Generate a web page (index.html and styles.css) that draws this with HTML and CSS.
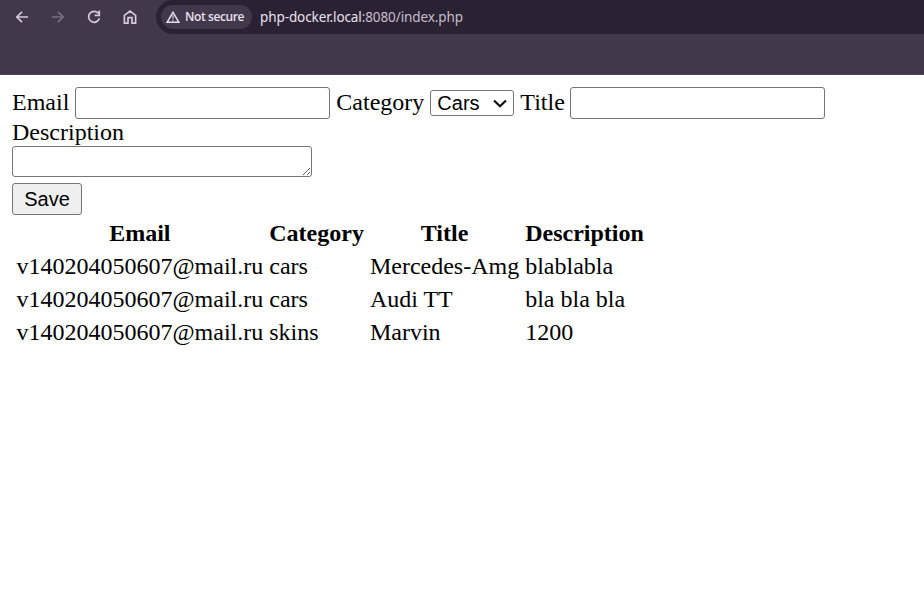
FILE: index.html
```
<!DOCTYPE html>
<html lang="en">
<head>
<meta charset="utf-8">
<title>php-docker.local</title>
<link rel="stylesheet" href="styles.css">
</head>
<body>
<header class="browser">
  <div class="toolbar">
    <nav class="nav">
      <svg class="icon" viewBox="0 0 16 16"><path d="M14 8H3M8 2.8L2.8 8L8 13.2"/></svg>
      <svg class="icon icon-off" viewBox="0 0 16 16"><path d="M2 8H13M8 2.8L13.2 8L8 13.2"/></svg>
      <svg class="icon" viewBox="0 0 16 16"><path d="M12.6 4.6A5.5 5.5 0 1 0 13.4 9.3M13.3 1.6V6.3H8.6"/></svg>
      <svg class="icon" viewBox="0 0 16 16"><path d="M2.4 14.1V6.3L8 2L13.6 6.3V14.1H10V8.6H6V14.1Z"/></svg>
    </nav>
    <div class="address">
      <div class="chip">
        <svg class="warn" viewBox="0 0 14 12"><path class="warn-edge" d="M7 1.3L12.9 11.3H1.1Z"/><path class="warn-mark" d="M7 4.2V7.8M7 8.7V10.4"/></svg>
        <span>Not secure</span>
      </div>
      <span class="url">php-docker.local<span class="path">:8080/index.php</span></span>
    </div>
  </div>
</header>
<main class="page">
  <form class="form">
    <div class="row">
      <label for="email">Email</label>
      <input id="email" class="input" type="text">
      <label for="category">Category</label>
      <div class="select-wrap">
        <select id="category" class="select"><option>Cars</option><option>Skins</option></select>
        <svg class="chevron" viewBox="0 0 14 9"><path d="M1 1.5L7 7.3L13 1.5"/></svg>
      </div>
      <label for="title">Title</label>
      <input id="title" class="input input-title" type="text">
    </div>
    <label class="desc-label" for="description">Description</label>
    <textarea id="description" class="textarea"></textarea>
    <button class="save" type="button">Save</button>
  </form>
  <table class="ads">
    <thead><tr><th>Email</th><th>Category</th><th>Title</th><th>Description</th></tr></thead>
    <tbody>
      <tr><td>v140204050607@mail.ru</td><td>cars</td><td>Mercedes-Amg</td><td>blablabla</td></tr>
      <tr><td>v140204050607@mail.ru</td><td>cars</td><td>Audi TT</td><td>bla bla bla</td></tr>
      <tr><td>v140204050607@mail.ru</td><td>skins</td><td>Marvin</td><td>1200</td></tr>
    </tbody>
  </table>
</main>
</body>
</html>
```
FILE: styles.css
```
* { box-sizing: border-box; }
body {
  margin: 0;
  background: #fff;
  color: #000;
  font: 24px/27px "Liberation Serif", serif;
}
.browser {
  height: 75px;
  background: #41384b;
  border-bottom: 1px solid #514b58;
  overflow: hidden;
}
.toolbar { display: flex; height: 34px; }
.nav {
  display: flex;
  align-items: center;
  gap: 20px;
  width: 156px;
  padding-left: 14px;
}
.icon {
  width: 16px;
  height: 16px;
  fill: none;
  stroke: #d5c8df;
  stroke-width: 1.7;
}
.icon-off { stroke: #786f81; }
.address {
  flex: 1;
  display: flex;
  align-items: center;
  gap: 8px;
  padding-left: 5px;
  background: #2a2233;
  border-radius: 17px 0 0 17px;
}
.chip {
  display: flex;
  align-items: center;
  gap: 5px;
  width: 91px;
  height: 24px;
  padding-left: 5px;
  border-radius: 12px;
  background: #41384b;
  color: #eae2ef;
  font: 600 12px/24px "Open Sans", sans-serif;
  letter-spacing: -0.4px;
  white-space: nowrap;
}
.warn { width: 14px; height: 12px; fill: none; }
.warn-edge { stroke: #e6deeb; stroke-width: 1.5; }
.warn-mark { stroke: #b8afbf; stroke-width: 1.5; }
.url {
  color: #e9e1ed;
  font: 13.5px/24px "Noto Sans", sans-serif;
  letter-spacing: -0.1px;
}
.path { color: #c8bdcd; }
.page { padding: 12px; }
.form {
  display: flex;
  flex-direction: column;
  align-items: flex-start;
}
.row { display: flex; align-items: center; gap: 6px; height: 32px; }
.row label { position: relative; top: -1px; }
.input {
  width: 255px;
  height: 32px;
  border: 1px solid #767676;
  border-radius: 3px;
  background: #fff;
}
.input-title { margin-left: -1px; }
.select-wrap { position: relative; width: 84px; height: 26px; }
.select {
  display: block;
  appearance: none;
  width: 84px;
  height: 26px;
  padding: 0 6px;
  border: 1px solid #767676;
  border-radius: 3px;
  background: #fff;
  color: #000;
  font: 20px/24px "Liberation Sans", sans-serif;
}
.chevron {
  position: absolute;
  top: 9px;
  right: 7px;
  width: 14px;
  height: 9px;
  fill: none;
  stroke: #111;
  stroke-width: 2.2;
  pointer-events: none;
}
.desc-label { height: 27px; }
.textarea {
  display: block;
  width: 300px;
  height: 31px;
  border: 1px solid #767676;
  border-radius: 3px;
  background: #fff;
  resize: both;
}
.save {
  width: 70px;
  height: 32px;
  margin-top: 6px;
  padding: 0;
  border: 1px solid #767676;
  border-radius: 3px;
  background: #efefef;
  color: #000;
  font: 20px/28px "Liberation Sans", sans-serif;
}
.ads { border-spacing: 3px; }
.ads th, .ads td { padding: 1.5px; white-space: nowrap; }
```
